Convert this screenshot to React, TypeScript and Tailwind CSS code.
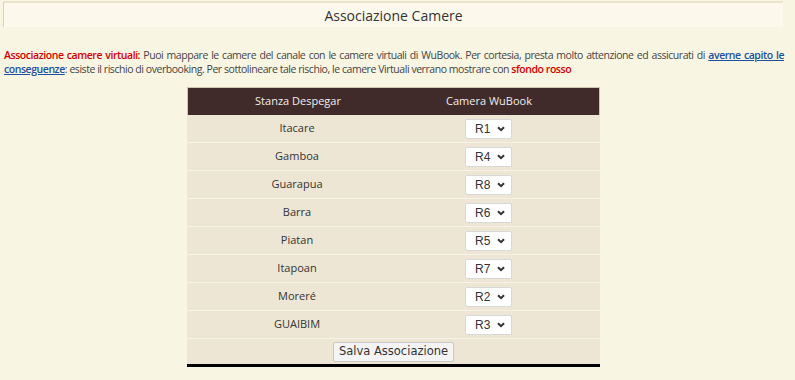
import React from "react";

const rows: [string, string][] = [
  ["Itacare", "R1"],
  ["Gamboa", "R4"],
  ["Guarapua", "R8"],
  ["Barra", "R6"],
  ["Piatan", "R5"],
  ["Itapoan", "R7"],
  ["Moreré", "R2"],
  ["GUAIBIM", "R3"],
];

function Sel({ v }: { v: string }) {
  return (
    <div className="w-[47px] h-[20px] bg-white border border-[#d8d8d8] rounded-[2px] flex items-center justify-between pl-[9px] pr-[6px] text-[12px] text-[#333]" style={{ fontFamily: '"Liberation Sans", Arial, sans-serif' }}>
      <span>{v}</span>
      <svg width="8" height="6" viewBox="0 0 8 6">
        <path d="M1 1.2 L4 4.2 L7 1.2" fill="none" stroke="#333" strokeWidth="2" />
      </svg>
    </div>
  );
}

export default function App() {
  return (
    <div className="w-[795px] h-[380px] bg-[#f9f5e3] overflow-hidden pt-[1px]" style={{ fontFamily: '"Open Sans", sans-serif' }}>
      <div className="ml-[3px] w-[780px] h-[26px] bg-[#fcf9ec] border-t-2 border-t-[#ebe4cc] border-l border-l-[#d9d2bc] flex items-center justify-center text-[14px] text-[#333]">
        Associazione Camere
      </div>
      <p className="mt-[21px] ml-[4px] w-[780px] text-[10.5px] tracking-[-0.45px] leading-[14px] text-[#444] text-justify">
        <b className="text-[#d40000] font-semibold">Associazione camere virtuali:</b> Puoi mappare le camere del canale con le camere virtuali di WuBook. Per cortesia, presta molto attenzione ed assicurati di{" "}
        <a className="text-[#1d4fa0] font-semibold underline">averne capito le conseguenze</a>: esiste il rischio di overbooking. Per sottolineare tale rischio, le camere Virtuali verrano mostrare con{" "}
        <b className="text-[#d40000] font-semibold">sfondo rosso</b>
      </p>
      <div className="mt-[11px] ml-[187px] w-[413px] border-b-[3px] border-b-black">
        <div className="h-[28px] bg-[#402b2a] flex items-center text-[11px] text-[#eee] border border-[#cfc6b0] border-b-0">
          <div className="w-[220px] text-center">Stanza Despegar</div>
          <div className="w-[162px] text-center">Camera WuBook</div>
        </div>
        <div className="bg-[#ede6d4]">
          {rows.map(([n, v]) => (
            <div key={n} className="h-[28px] flex items-center text-[11px] text-[#333] border-b border-b-[#f7f3e6]">
              <div className="w-[220px] text-center">{n}</div>
              <div className="w-[162px] flex justify-center pl-[1px]">
                <Sel v={v} />
              </div>
            </div>
          ))}
          <div className="h-[25px] flex items-center justify-center">
            <button className="h-[20px] px-[5px] bg-[#f4f4f4] border border-[#c8c8c8] rounded-[2px] text-[11.5px] text-[#333]" style={{ fontFamily: '"DejaVu Sans", sans-serif' }}>
              Salva Associazione
            </button>
          </div>
        </div>
      </div>
    </div>
  );
}
